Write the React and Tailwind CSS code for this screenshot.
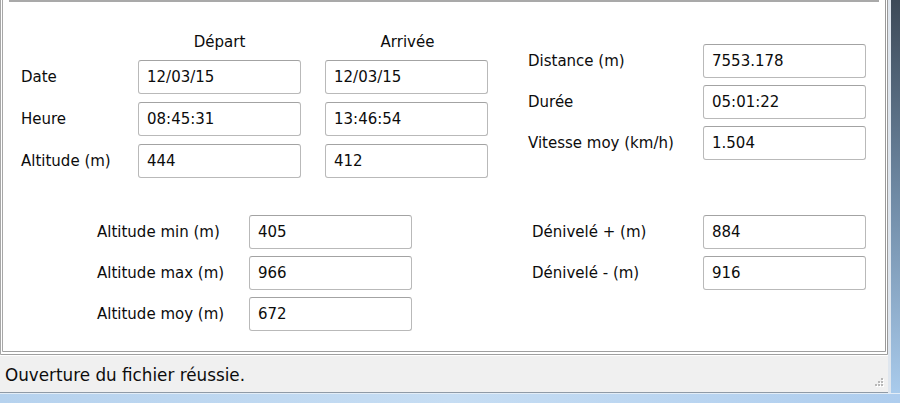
import React from 'react';

const font = { fontFamily: '"DejaVu Sans", Verdana, sans-serif' };

const Field = ({ value }) => (
  <div className="h-[34px] w-[163px] rounded-[3px] border border-[#b9b9b9] border-t-[#a3a3a3] bg-white pl-[8px] flex items-center text-[15px] text-[#0c0c0c]">
    {value}
  </div>
);

const Row = ({ label, value, labelW }) => (
  <div className="flex items-center h-[34px]">
    <div className={`${labelW} text-[15px] text-[#0c0c0c] shrink-0`}>{label}</div>
    <Field value={value} />
  </div>
);

const Grip = () => (
  <svg width="12" height="12" viewBox="0 0 12 12" className="mb-[3px] mr-[4px]">
    {[
      [9, 1],
      [6, 4],
      [9, 4],
      [3, 7],
      [6, 7],
      [9, 7],
    ].map(([x, y]) => (
      <g key={`${x}-${y}`}>
        <rect x={x + 1} y={y + 1} width="2" height="2" fill="#fff" />
        <rect x={x} y={y} width="2" height="2" fill="#b8b8b8" />
      </g>
    ))}
  </svg>
);

export default function App() {
  const depart = [
    { label: 'Date', a: '12/03/15', b: '12/03/15' },
    { label: 'Heure', a: '08:45:31', b: '13:46:54' },
    { label: 'Altitude (m)', a: '444', b: '412' },
  ];
  const totals = [
    { label: 'Distance (m)', value: '7553.178' },
    { label: 'Durée', value: '05:01:22' },
    { label: 'Vitesse moy (km/h)', value: '1.504' },
  ];
  const altitudes = [
    { label: 'Altitude min (m)', value: '405' },
    { label: 'Altitude max (m)', value: '966' },
    { label: 'Altitude moy (m)', value: '672' },
  ];
  const denivele = [
    { label: 'Dénivelé + (m)', value: '884' },
    { label: 'Dénivelé - (m)', value: '916' },
  ];

  return (
    <div className="w-[900px] h-[403px] overflow-hidden flex flex-col bg-[#bcd6ef]" style={font}>
      <div className="flex h-[393px]">
        {/* main area */}
        <div className="w-[888px] flex flex-col bg-[#f0f0f0]">
          {/* white panel */}
          <div className="h-[355px] bg-white border-l-[3px] border-l-[#a7a7a7] border-r-[3px] border-r-[#9a9a9a] border-b-[4px] border-b-[#a0a0a0] border-double flex flex-col">
            <div className="ml-[6px] mr-[6px] h-[2px] bg-[#a9a9a9]" />

            {/* top section */}
            <div className="flex h-[213px]">
              <div className="pl-[18px] pt-[29px]">
                <div className="flex h-[22px] items-center text-[15px] text-[#0c0c0c]">
                  <div className="w-[117px]" />
                  <div className="w-[163px] text-center">Départ</div>
                  <div className="w-[25px]" />
                  <div className="w-[163px] text-center">Arrivée</div>
                </div>
                <div className="mt-[7px] flex flex-col gap-[8px]">
                  {depart.map((r) => (
                    <div key={r.label} className="flex items-center h-[34px]">
                      <div className="w-[117px] text-[15px] text-[#0c0c0c]">{r.label}</div>
                      <Field value={r.a} />
                      <div className="w-[24px]" />
                      <Field value={r.b} />
                    </div>
                  ))}
                </div>
              </div>
              <div className="ml-[39px] pt-[42px] flex flex-col gap-[7px]">
                {totals.map((r) => (
                  <Row key={r.label} label={r.label} value={r.value} labelW="w-[175px]" />
                ))}
              </div>
            </div>

            {/* bottom section */}
            <div className="flex">
              <div className="pl-[94px] flex flex-col gap-[7px]">
                {altitudes.map((r) => (
                  <Row key={r.label} label={r.label} value={r.value} labelW="w-[152px]" />
                ))}
              </div>
              <div className="ml-[120px] flex flex-col gap-[7px]">
                {denivele.map((r) => (
                  <Row key={r.label} label={r.label} value={r.value} labelW="w-[171px]" />
                ))}
              </div>
            </div>
          </div>

          {/* status bar */}
          <div className="flex-1 flex items-end justify-between border-t border-t-white border-b border-b-[#8f9aa6]">
            <div className="pl-[5px] pb-[4px] text-[16.8px] text-[#0c0c0c]">Ouverture du fichier réussie.</div>
            <Grip />
          </div>
        </div>

        {/* right window frame */}
        <div className="flex-1 flex">
          <div className="w-[3px] bg-[#dfe6ee]" />
          <div className="flex-1 bg-gradient-to-b from-[#3d4a58] via-[#6f8aa5] to-[#a9cbec]" />
        </div>
      </div>

      {/* bottom window frame */}
      <div className="flex-1 bg-gradient-to-r from-[#b6d2ee] via-[#c6ddf3] to-[#aecdee] border-t border-t-[#e3edf7]" />
    </div>
  );
}
